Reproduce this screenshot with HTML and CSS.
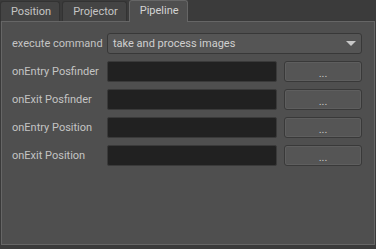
FILE: index.html
```html
<!DOCTYPE html>
<html lang="en">
<head>
  <meta charset="UTF-8" />
  <title>Pipeline</title>
  <link rel="stylesheet" href="styles.css">
</head>
<body>
  <div class="tabs">
    <div class="tab">Position</div>
    <div class="tab">Projector</div>
    <div class="tab active">Pipeline</div>
  </div>

  <div class="panel">
    <div class="form">
      <label>execute command</label>
      <div class="combo">
        <span>take and process images</span>
        <span class="arrow"></span>
      </div>

      <label>onEntry Posfinder</label>
      <div class="field"></div>
      <button>...</button>

      <label>onExit Posfinder</label>
      <div class="field"></div>
      <button>...</button>

      <label>onEntry Position</label>
      <div class="field"></div>
      <button>...</button>

      <label>onExit Position</label>
      <div class="field"></div>
      <button>...</button>
    </div>
  </div>
</body>
</html>
```

FILE: styles.css
```css
body {
  margin: 0;
  background: #3b3b3b;
  font-family: Roboto, 'Liberation Sans', sans-serif;
  font-size: 11px;
  color: #c4c4c4;
  width: 376px;
  height: 249px;
  overflow: hidden;
}

.tabs {
  display: flex;
  align-items: flex-end;
  height: 21px;
}

.tab {
  height: 20px;
  line-height: 20px;
  padding: 0 8px 0 10px;
  margin-right: 2px;
  background: #444444;
  border: 1px solid #333333;
  border-bottom: none;
  border-radius: 3px 3px 0 0;
  box-sizing: border-box;
}

.tab.active {
  height: 22px;
  line-height: 19px;
  background: #4f4f4f;
  border-color: #666666;
  color: #d4d4d4;
  position: relative;
  z-index: 1;
  margin-bottom: -1px;
}

.panel {
  height: 224px;
  margin: 0 1px;
  border: 1px solid #666666;
  background: #4f4f4f;
  box-sizing: border-box;
  box-shadow: 0 0 0 1px #3a3a3a;
}

.form {
  display: grid;
  grid-template-columns: 88px 170px 78px;
  grid-auto-rows: 21px;
  column-gap: 7px;
  row-gap: 7px;
  padding: 11px 0 0 10px;
  align-items: center;
}

label {
  white-space: nowrap;
}

.combo {
  grid-column: 2 / 4;
  height: 21px;
  display: flex;
  align-items: center;
  justify-content: space-between;
  padding: 0 5px;
  background: #555555;
  border: 1px solid #383838;
  border-radius: 3px;
  box-sizing: border-box;
  color: #d0d0d0;
}

.arrow {
  width: 0;
  height: 0;
  border-left: 5px solid transparent;
  border-right: 5px solid transparent;
  border-top: 5px solid #c8c8c8;
}

.field {
  height: 21px;
  background: #212121;
  border: 1px solid #3a3a3a;
  border-radius: 2px;
  box-sizing: border-box;
}

button {
  height: 21px;
  background: #555555;
  border: 1px solid #393939;
  border-radius: 3px;
  box-shadow: inset 0 0 0 1px #5e5e5e;
  font-family: Roboto, 'Liberation Sans', sans-serif;
  font-size: 11px;
  color: #c8c8c8;
  padding: 3px 0 0;
}
```
